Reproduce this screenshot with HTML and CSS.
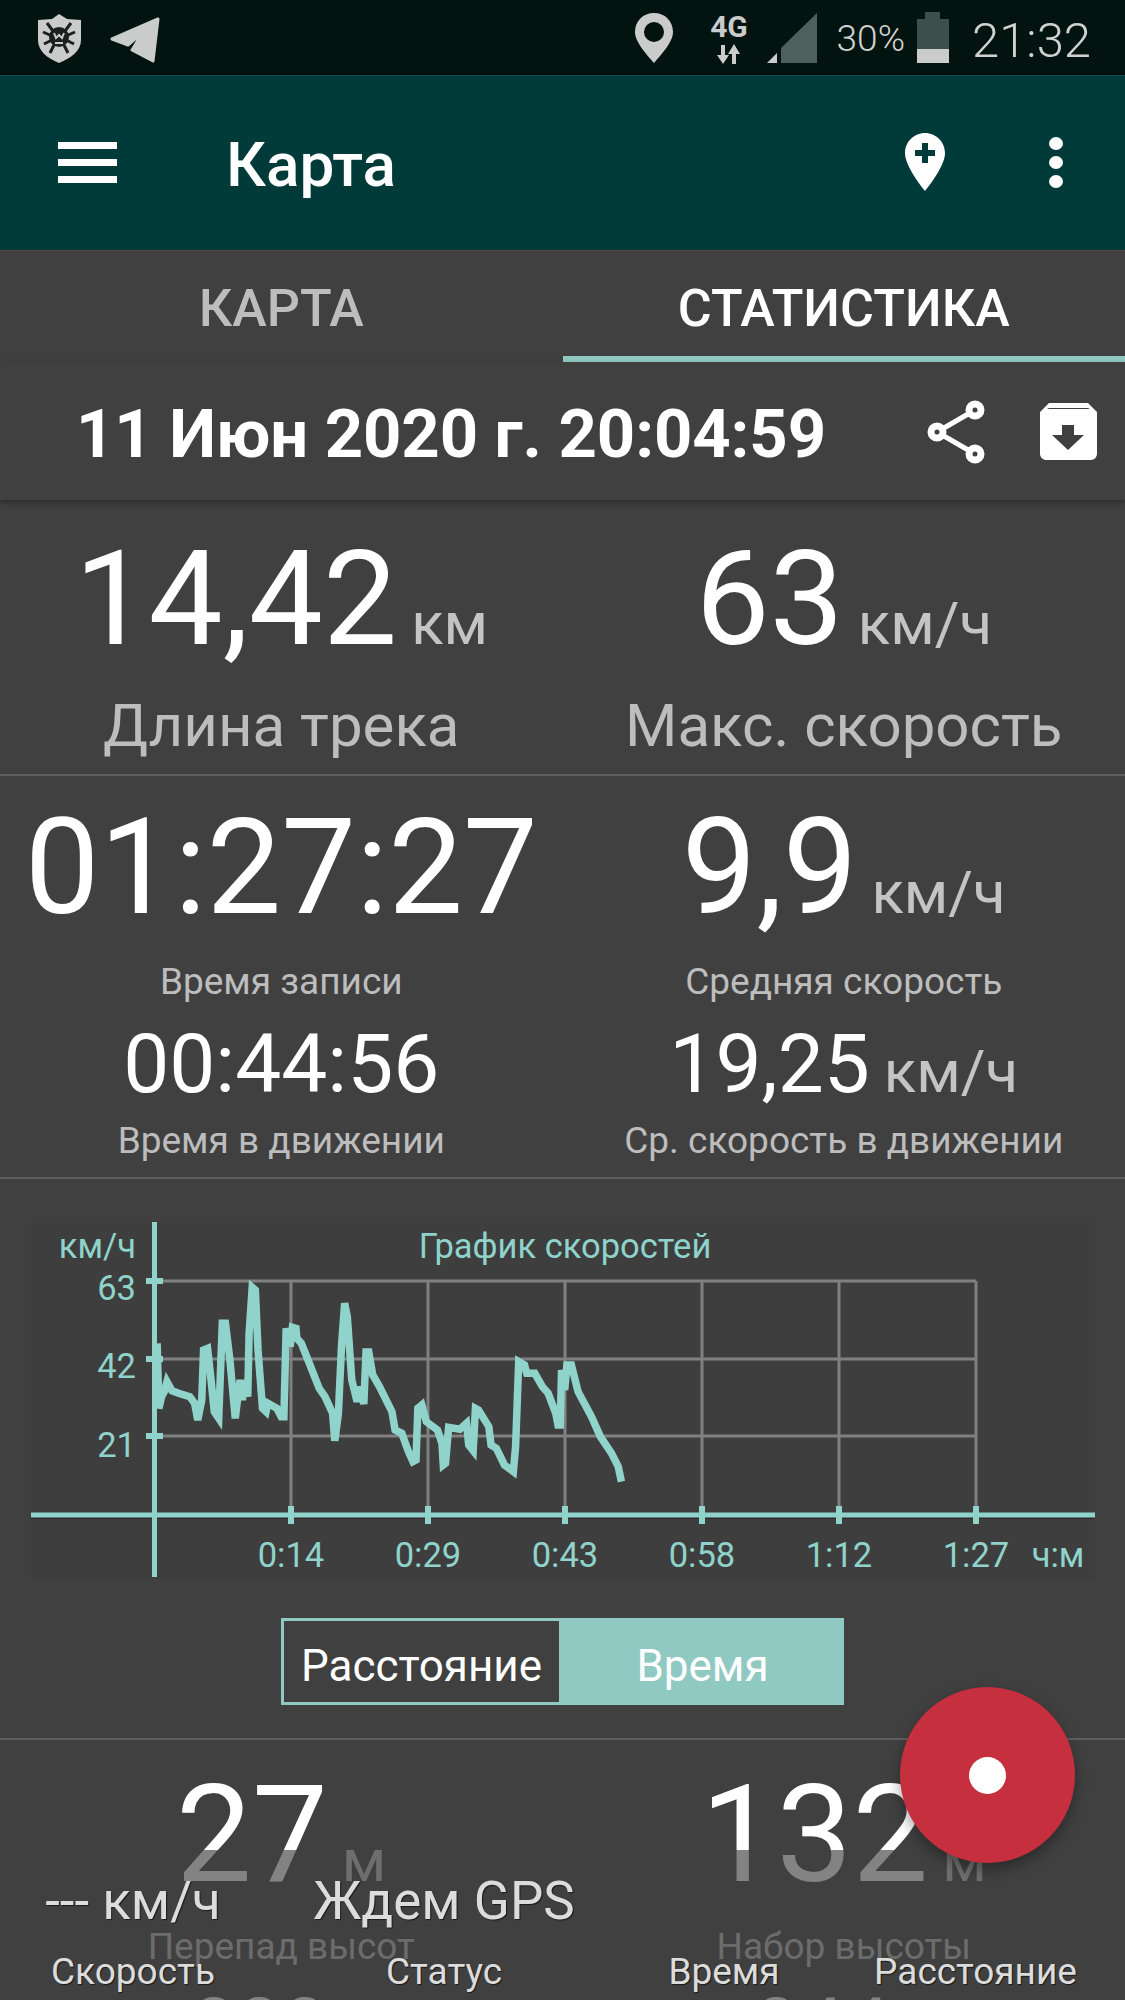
FILE: index.html
```html
<!DOCTYPE html>
<html lang="ru">
<head>
<meta charset="utf-8">
<title>Карта</title>
<link rel="stylesheet" href="styles.css">
</head>
<body>
<div class="app">
  <header class="statusbar">
    <div class="status-left">
      <svg class="ic-shield" viewBox="37 13 46 50"><path class="s-light" d="M59 14l8 5 14 1v20c0 11-10 18-22 23-12-5-21-12-21-23V20l14-1z"/><path class="s-dark-line" d="M47 23l6 8M71 23l-6 8M43 32l9 4M75 32l-9 4M44 44l8-4M74 44l-8-4M50 53l4-8M68 53l-4-8"/><circle class="s-dark" cx="59" cy="37" r="10"/><path class="s-light-line" d="M54 33l2 5 3-3 3 3 2-5M55 43h8"/></svg>
      <svg class="ic-plane" viewBox="110 17 50 46"><path class="s-light s-round" d="M158 19 112 39l16 6 15-13-11 18 21 11z"/></svg>
    </div>
    <div class="status-right">
      <svg class="ic-pin" viewBox="636 13 38 50"><path class="s-light" fill-rule="evenodd" d="M655 13c-11 0-19 8-19 19 0 10 12 23 19 31 7-8 19-21 19-31 0-11-8-19-19-19zm0 9a10 10 0 110 20 10 10 0 010-20z"/></svg>
      <svg class="ic-net" viewBox="710 10 45 56"><text class="net-text" x="732" y="37">4G</text><path class="s-light" d="M724 45h4v10h4l-6 9-6-9h4zM739 64h-4V54h-4l6-10 6 10h-4z"/></svg>
      <svg class="ic-signal" viewBox="770 12 50 52"><path class="s-signal" d="M820 13v50h-36v-15z"/><path class="s-light" d="M780 53v10h-10z"/></svg>
      <span class="status-pct">30%</span>
      <svg class="ic-batt" viewBox="918 12 32 52"><path class="s-batt" d="M926 12h15v7h9v30h-32V19h8z"/><rect class="s-light" x="918" y="49" width="32" height="14"/></svg>
      <span class="status-time">21:32</span>
    </div>
  </header>

  <div class="toolbar">
    <div class="burger"><i></i><i></i><i></i></div>
    <h1 class="title">Карта</h1>
    <svg class="ic-addpin" viewBox="0 0 40 58"><path class="s-white" fill-rule="evenodd" d="M20 0C9 0 0 9 0 20c0 11 12 28 20 38 8-10 20-27 20-38C40 9 31 0 20 0zm-3 10h6v7h7v6h-7v7h-6v-7h-7v-6h7z"/></svg>
    <div class="dots"><i></i><i></i><i></i></div>
  </div>

  <nav class="tabs">
    <div class="tab">КАРТА</div>
    <div class="tab tab-active">СТАТИСТИКА</div>
  </nav>

  <div class="daterow">
    <div class="date">11 Июн 2020 г. 20:04:59</div>
    <svg class="ic-share" viewBox="926 398 60 68"><path class="share-line" d="M975 410l-38 22 38 22"/><g class="share-node"><circle cx="975" cy="410" r="6"/><circle cx="937" cy="432" r="6"/><circle cx="975" cy="454" r="6"/></g></svg>
    <svg class="ic-archive" viewBox="0 0 57 57"><path class="s-white" fill-rule="evenodd" d="M9 0h39l9 9v42a6 6 0 01-6 6H6a6 6 0 01-6-6V9zm0 5l-2 1h43l-2-1zM22 22v10H12l16 15 16-15H34V22z"/></svg>
  </div>

  <section class="stats stats-one">
    <div class="stat">
      <div class="big"><span>14,42</span><span class="unit">км</span></div>
      <div class="label-large">Длина трека</div>
    </div>
    <div class="stat">
      <div class="big"><span>63</span><span class="unit">км/ч</span></div>
      <div class="label-large">Макс. скорость</div>
    </div>
  </section>

  <section class="stats stats-two">
    <div class="stat">
      <div class="huge">01:27:27</div>
      <div class="label">Время записи</div>
      <div class="mid">00:44:56</div>
      <div class="label label-tight">Время в движении</div>
    </div>
    <div class="stat">
      <div class="huge"><span>9,9</span><span class="unit">км/ч</span></div>
      <div class="label">Средняя скорость</div>
      <div class="mid"><span>19,25</span><span class="unit">км/ч</span></div>
      <div class="label label-tight">Ср. скорость в движении</div>
    </div>
  </section>

  <section class="chart-section">
    <svg class="chart" viewBox="31 1222 1064 358">
      <rect class="chart-bg" x="31" y="1222" width="1064" height="358"/>
      <path class="grid" d="M154 1281H976M154 1359H976M154 1436H976M291 1281V1515M428 1281V1515M565 1281V1515M702 1281V1515M839 1281V1515M976 1281V1515"/>
      <path class="axis-shadow" d="M31 1518H1095"/>
      <path class="axis" d="M31 1515H1095M154.500 1222V1577"/>
      <path class="tick" d="M146 1281h17M146 1359h17M146 1436h17M291 1506v18M428 1506v18M565 1506v18M702 1506v18M839 1506v18M976 1506v18"/>
      <polyline class="line" transform="translate(0 1200) scale(.4464 .3333)" points="352,430 356,625 362,590 368,575 374,545 385,572 400,580 425,590 436,610 443,660 452,600 456,450 465,445 472,530 480,635 490,655 498,370 505,370 515,480 527,655 532,600 538,540 543,600 548,540 555,590 558,400 565,262 572,270 578,450 588,625 596,635 600,610 620,625 630,650 636,650 641,385 650,440 655,382 663,385 665,415 675,430 690,480 715,565 728,590 745,640 750,722 758,640 765,440 772,310 778,350 788,540 800,605 808,560 815,612 820,456 826,456 835,525 850,560 878,635 885,690 900,700 915,755 925,785 932,780 936,625 945,615 955,665 980,690 990,730 993,795 998,790 1005,682 1030,688 1045,670 1050,735 1060,752 1065,625 1072,630 1095,680 1100,735 1112,745 1130,795 1150,815 1155,740 1162,485 1175,495 1180,520 1198,520 1215,560 1228,580 1245,640 1250,675 1255,675 1258,510 1265,570 1270,495 1280,495 1295,575 1325,650 1345,710 1370,760 1385,800 1392,845"/>
      <text class="ct" x="136" y="1258" text-anchor="end">км/ч</text>
      <text class="ct" x="565" y="1258" text-anchor="middle">График скоростей</text>
      <text class="ct" x="136" y="1300" text-anchor="end">63</text>
      <text class="ct" x="136" y="1378" text-anchor="end">42</text>
      <text class="ct" x="136" y="1457" text-anchor="end">21</text>
      <text class="ct" x="291" y="1567" text-anchor="middle">0:14</text>
      <text class="ct" x="428" y="1567" text-anchor="middle">0:29</text>
      <text class="ct" x="565" y="1567" text-anchor="middle">0:43</text>
      <text class="ct" x="702" y="1567" text-anchor="middle">0:58</text>
      <text class="ct" x="839" y="1567" text-anchor="middle">1:12</text>
      <text class="ct" x="976" y="1567" text-anchor="middle">1:27</text>
      <text class="ct" x="1058" y="1567" text-anchor="middle">ч:м</text>
    </svg>
    <div class="toggle">
      <div class="seg seg-off">Расстояние</div>
      <div class="seg seg-on">Время</div>
    </div>
  </section>

  <section class="stats stats-three">
    <div class="stat">
      <div class="big-alt"><span>27</span><span class="unit">м</span></div>
      <div class="label label-alt">Перепад высот</div>
      <div class="next">000</div>
    </div>
    <div class="stat">
      <div class="big-alt"><span>132</span><span class="unit">м</span></div>
      <div class="label label-alt">Набор высоты</div>
      <div class="next">044</div>
    </div>
  </section>

  <div class="overlay">
    <div class="ov-val">--- км/ч</div>
    <div class="ov-val">Ждем GPS</div>
    <div class="ov-val"></div>
    <div class="ov-val"></div>
    <div class="ov-cap">Скорость</div>
    <div class="ov-cap">Статус</div>
    <div class="ov-cap">Время</div>
    <div class="ov-cap">Расстояние</div>
  </div>

  <div class="fab"><i></i></div>
</div>
</body>
</html>
```
FILE: styles.css
```css
* { box-sizing: border-box; }
html, body { margin: 0; padding: 0; background: #404040; }
body { font-family: Roboto, "Noto Sans", sans-serif; color: #fff; }
.app { position: relative; width: 1125px; height: 2000px; overflow: hidden; background: #404040; }

/* status bar */
.statusbar { height: 75px; background: #03130f; display: flex; justify-content: space-between; align-items: flex-start; padding: 0 34px 0 37px; border-bottom: 1px solid #000; }
.status-left { display: flex; align-items: flex-start; }
.status-right { display: flex; align-items: flex-start; }
.ic-shield { width: 46px; height: 50px; margin-top: 13px; }
.ic-plane { width: 50px; height: 46px; margin: 17px 0 0 27px; }
.ic-pin { width: 38px; height: 50px; margin-top: 13px; }
.ic-net { width: 45px; height: 56px; margin: 10px 0 0 34px; }
.ic-signal { width: 50px; height: 52px; margin: 12px 0 0 15px; }
.ic-batt { width: 32px; height: 52px; margin: 12px 0 0 12px; }
.status-pct { margin: 18px 0 0 20px; font-size: 37px; line-height: 42px; font-weight: 300; color: #cfd2d0; }
.status-time { margin: 13px 0 0 23px; font-size: 49px; line-height: 56px; font-weight: 300; color: #cfd2d0; }
.s-light { fill: #c9cccb; }
.s-round { stroke: #c9cccb; stroke-width: 3; stroke-linejoin: round; }
.s-dark { fill: #1b1f1e; }
.s-dark-line { fill: none; stroke: #1b1f1e; stroke-width: 3; }
.s-light-line { fill: none; stroke: #c9cccb; stroke-width: 2; }
.s-signal { fill: #4e5f5c; }
.s-batt { fill: #3d4e4b; }
.s-white { fill: #fff; }
.net-text { font-family: Roboto, sans-serif; font-weight: 700; font-size: 30px; fill: #c9cccb; text-anchor: middle; }

/* toolbar */
.toolbar { height: 176px; background: #003b3a; border-top: 1px solid #0d5a58; border-bottom: 1px solid #5a3f3b; display: flex; align-items: center; padding: 0 58px; }
.burger { width: 59px; height: 41px; display: flex; flex-direction: column; justify-content: space-between; margin-top: -2px; }
.burger i { display: block; height: 7px; background: #fff; }
.title { margin: 4px 0 0 109px; font-size: 62px; line-height: 70px; font-weight: 500; flex: 1; color: #fff; }
.ic-addpin { width: 40px; height: 58px; margin: -2px -2px 0 0; }
.dots { width: 14px; height: 51px; margin: -2px 4px 0 106px; display: flex; flex-direction: column; justify-content: space-between; }
.dots i { display: block; width: 14px; height: 13px; border-radius: 50%; background: #fff; }

/* tabs */
.tabs { height: 111px; display: flex; }
.tab { flex: 1; text-align: center; font-size: 52px; line-height: 100px; padding-top: 8px; font-weight: 500; color: #bdbdbd; }
.tab-active { color: #fff; border-bottom: 6px solid #8fc9c1; }

/* date row */
.daterow { height: 138px; display: flex; align-items: flex-start; padding-left: 76px; background: #404040; box-shadow: 0 3px 6px rgba(0,0,0,.3); position: relative; }
.date { flex: 1; font-size: 67px; letter-spacing: -.1px; line-height: 76px; font-weight: 700; padding-top: 34px; white-space: nowrap; }
.ic-share { width: 60px; height: 68px; margin: 36px 0 0 0; }
.ic-archive { width: 57px; height: 57px; margin: 41px 28px 0 54px; }
.share-line { fill: none; stroke: #fff; stroke-width: 5; }
.share-node circle { fill: #404040; stroke: #fff; stroke-width: 7; }

/* stats */
.stats { display: flex; border-bottom: 2px solid #5f5f5f; }
.stat { flex: 1; min-width: 0; text-align: center; }
.stats-one { height: 276px; padding-top: 19px; }
.stats-two { height: 403px; padding-top: 17px; }
.stats-three { border-bottom: 0; padding-top: 20px; }
.big { font-size: 132px; line-height: 160px; font-weight: 400; white-space: nowrap; }
.huge { font-size: 133px; line-height: 150px; font-weight: 400; white-space: nowrap; }
.mid { font-size: 82px; line-height: 100px; font-weight: 400; margin-top: 10px; white-space: nowrap; }
.big-alt { font-size: 135px; line-height: 150px; font-weight: 400; white-space: nowrap; }
.unit { font-size: 60px; line-height: 1; margin-left: 14px; color: #c4c4c4; }
.label-large { font-size: 60px; line-height: 70px; margin-top: 12px; font-weight: 400; color: #bdbdbd; white-space: nowrap; }
.label { font-size: 37px; line-height: 44px; margin-top: 17px; color: #bdbdbd; white-space: nowrap; }
.label-tight { margin-top: 5px; }
.label-alt { margin-top: 15px; }
.next { font-size: 81px; line-height: 100px; font-weight: 400; margin-top: 10px; padding-right: 44px; }

/* chart */
.chart-section { height: 561px; padding-top: 43px; border-bottom: 2px solid #5f5f5f; display: flex; flex-direction: column; align-items: center; }
.chart { width: 1064px; height: 358px; display: block; flex: none; }
.chart-bg { fill: #3e3e3e; }
.grid { fill: none; stroke: #808080; stroke-width: 3; }
.axis { fill: none; stroke: #8fd3ca; stroke-width: 5; }
.axis-shadow { fill: none; stroke: #2e2a2a; stroke-width: 2; }
.tick { fill: none; stroke: #8fd3ca; stroke-width: 6; }
.line { fill: none; stroke: #8fd3ca; stroke-width: 7.5; stroke-linejoin: miter; vector-effect: non-scaling-stroke; }
.ct { font-family: Roboto, sans-serif; font-size: 34.5px; font-weight: 400; fill: #8fd3ca; }

.toggle { width: 563px; height: 87px; margin-top: 38px; display: flex; border: 3px solid #8fc9c1; background: #8fc9c1; flex: none; }
.seg { flex: 1; text-align: center; font-size: 44px; line-height: 74px; padding-top: 8px; color: #fff; white-space: nowrap; }
.seg-off { background: #404040; flex: none; width: 275px; }
.seg-on { background: #8fc9c1; padding-left: 5px; }

/* overlay panel */
.overlay { position: absolute; left: 0; top: 1850px; width: 1125px; height: 150px; padding-top: 21px; background: rgba(64,64,64,.65); display: grid; grid-template-columns: 266px 356px 204px 299px; grid-template-rows: 60px 48px; row-gap: 17px; text-align: center; text-shadow: 1px 1px 1px rgba(0,0,0,.6); }
.ov-val { font-size: 53px; line-height: 60px; font-weight: 400; color: #dcdcdc; white-space: nowrap; }
.ov-cap { font-size: 37px; line-height: 48px; font-weight: 400; color: #dcdcdc; white-space: nowrap; }

/* fab */
.fab { position: absolute; left: 900px; top: 1687px; width: 175px; height: 176px; border-radius: 50%; background: #c62f3d; box-shadow: 0 6px 14px rgba(0,0,0,.35); display: flex; align-items: center; justify-content: center; }
.fab i { display: block; width: 37px; height: 37px; border-radius: 50%; background: #fff; }
```
